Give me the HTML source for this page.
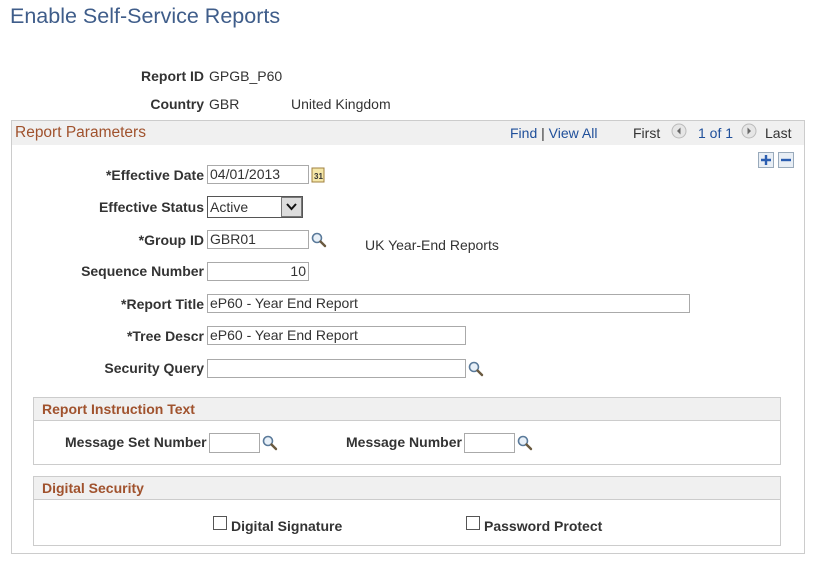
<!DOCTYPE html>
<html><head><meta charset="utf-8"><style>
body{margin:0;width:815px;height:562px;background:#fff;font-family:"Liberation Sans",Arial,sans-serif;font-size:14px;color:#333;position:relative;overflow:hidden}
.a{position:absolute;white-space:nowrap}
.l{position:absolute;right:611px;font-weight:bold;color:#333;white-space:nowrap}
.in{position:absolute;height:19px;border:1px solid #aaa;box-sizing:border-box;background:#fff;font-size:14px;line-height:17px;padding-left:2px;color:#333}
.mg{position:absolute;width:16px;height:16px}
.box{position:absolute;border:1px solid #ccc;box-sizing:border-box}
.hd{position:absolute;left:0;right:0;top:0;background:#f0f0f0;border-bottom:1px solid #ccc;color:#a0522d;font-weight:bold;font-size:14px;padding-left:8px;box-sizing:border-box}
.cb{position:absolute;width:12px;height:12px;border:1px solid #555;background:#fff}
</style></head><body>
<svg width="0" height="0" style="position:absolute"><defs><symbol id="mg" viewBox="0 0 16 16"><circle cx="6" cy="6" r="4.5" fill="#e8f0f8" stroke="#5a7a9a" stroke-width="1.6"/><path d="M9.5 9.5L14 14" stroke="#6a5a40" stroke-width="2.4" stroke-linecap="round"/></symbol></defs></svg>
<div class="a" style="left:10px;top:4px;font-size:21.5px;color:#3f5d8a">Enable Self-Service Reports</div>
<div class="l" style="top:68px">Report ID</div><div class="a" style="left:209px;top:68px">GPGB_P60</div>
<div class="l" style="top:96px">Country</div><div class="a" style="left:209px;top:96px">GBR</div><div class="a" style="left:291px;top:96px">United Kingdom</div>
<div class="box" style="left:11px;top:120px;width:794px;height:434px">
 <div class="hd" style="height:24px;font-weight:normal;color:#a0522d;padding-left:3px;line-height:23px;font-size:15.5px;border-bottom:none">Report Parameters</div>
 <div class="a" style="left:498px;top:4px;color:#1f4f9a">Find <span style="color:#333">|</span> View All</div>
 <div class="a" style="left:621px;top:4px;color:#333">First</div>
 <svg class="a" style="left:659px;top:2px" width="16" height="16"><circle cx="8" cy="8" r="7" fill="#e6e6e6" stroke="#bbb"/><path d="M9.5 4.5L6 8l3.5 3.5z" fill="#666"/></svg>
 <div class="a" style="left:686px;top:4px;color:#1f4f9a">1 of 1</div>
 <svg class="a" style="left:729px;top:2px" width="16" height="16"><circle cx="8" cy="8" r="7" fill="#e6e6e6" stroke="#bbb"/><path d="M6.5 4.5L10 8l-3.5 3.5z" fill="#666"/></svg>
 <div class="a" style="left:753px;top:4px;color:#333">Last</div>
 <svg class="a" style="left:746px;top:31px" width="36" height="16"><rect x="0.5" y="0.5" width="15" height="15" fill="#e8eef5" stroke="#9ab"/><path d="M8 3v10M3 8h10" stroke="#2a5db0" stroke-width="2.4"/><rect x="20.5" y="0.5" width="15" height="15" fill="#e8eef5" stroke="#9ab"/><path d="M23 8h10" stroke="#2a5db0" stroke-width="2.4"/></svg>
</div>
<div class="l" style="top:167px">*Effective Date</div><div class="in" style="left:207px;top:165px;width:102px">04/01/2013</div>
<svg class="a" style="left:311px;top:166px" width="14" height="17"><rect x="1" y="2" width="12" height="14" fill="#f5e7a8" stroke="#a08040"/><text x="3" y="13" font-size="8" font-weight="bold" font-family="Liberation Sans" fill="#333">31</text></svg>
<div class="l" style="top:199px">Effective Status</div>
<div class="in" style="left:207px;top:196px;width:96px;height:22px;border:1px solid #555;line-height:20px">Active</div>
<div class="a" style="left:281px;top:197px;width:21px;height:20px;background:#ddd;border:1px solid #777;box-sizing:border-box"><svg width="19" height="18"><path d="M5 6l4.5 5L14 6" stroke="#111" stroke-width="2" fill="none"/></svg></div>
<div class="l" style="top:232px">*Group ID</div><div class="in" style="left:207px;top:230px;width:102px">GBR01</div>
<svg class="mg" style="left:311px;top:232px"><use href="#mg"/></svg>
<div class="a" style="left:365px;top:237px">UK Year-End Reports</div>
<div class="l" style="top:263px">Sequence Number</div><div class="in" style="left:207px;top:262px;width:102px;text-align:right;padding-right:2px">10</div>
<div class="l" style="top:296px">*Report Title</div><div class="in" style="left:207px;top:294px;width:483px">eP60 - Year End Report</div>
<div class="l" style="top:328px">*Tree Descr</div><div class="in" style="left:207px;top:326px;width:259px">eP60 - Year End Report</div>
<div class="l" style="top:360px">Security Query</div><div class="in" style="left:207px;top:359px;width:259px"></div>
<svg class="mg" style="left:468px;top:361px"><use href="#mg"/></svg>
<div class="box" style="left:33px;top:397px;width:748px;height:68px"><div class="hd" style="height:23px;line-height:22px">Report Instruction Text</div></div>
<div class="a" style="left:65px;top:434px;font-weight:bold">Message Set Number</div><div class="in" style="left:209px;top:433px;width:51px;height:20px"></div>
<svg class="mg" style="left:262px;top:435px"><use href="#mg"/></svg>
<div class="a" style="left:346px;top:434px;font-weight:bold">Message Number</div><div class="in" style="left:464px;top:433px;width:51px;height:20px"></div>
<svg class="mg" style="left:517px;top:435px"><use href="#mg"/></svg>
<div class="box" style="left:33px;top:476px;width:748px;height:70px"><div class="hd" style="height:23px;line-height:22px">Digital Security</div></div>
<div class="cb" style="left:213px;top:516px"></div><div class="a" style="left:231px;top:518px;font-weight:bold">Digital Signature</div>
<div class="cb" style="left:466px;top:516px"></div><div class="a" style="left:484px;top:518px;font-weight:bold">Password Protect</div>
</body></html>
